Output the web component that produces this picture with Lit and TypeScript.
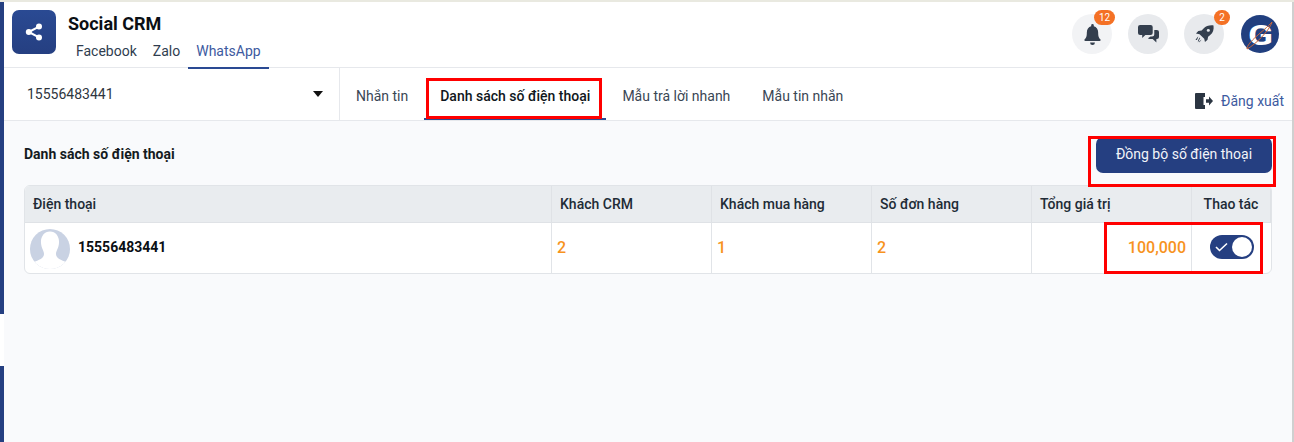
import { LitElement, css, html } from 'lit';
import { customElement } from 'lit/decorators.js';

@customElement('app-root')
export class AppRoot extends LitElement {
  static styles = css`
    :host {
      display: block;
      width: 1294px;
      height: 442px;
      position: relative;
      overflow: hidden;
      background: #fff;
      font-family: Roboto, 'Liberation Sans', sans-serif;
      color: #212b36;
    }

    .strip {
      height: 2px;
      background: #e9e9e0;
    }

    .shell {
      display: flex;
      height: 440px;
    }

    .rail {
      width: 4px;
      display: flex;
      flex-direction: column;
      flex-shrink: 0;
    }

    .rail .top {
      height: 312px;
      background: #253f81;
    }

    .rail .gap {
      height: 52px;
      background: #fff;
    }

    .rail .bottom {
      flex: 1;
      background: #253f81;
    }

    .main {
      flex: 1;
      min-width: 0;
      display: flex;
      flex-direction: column;
      border-right: 2px solid #cfd0d0;
    }

    .header {
      height: 66px;
      flex-shrink: 0;
      box-sizing: border-box;
      border-bottom: 1px solid #e6e8ec;
      display: flex;
      justify-content: space-between;
      padding: 8px 13px 0 8px;
    }

    .brand {
      display: flex;
      gap: 12px;
    }

    .logo {
      width: 44px;
      height: 44px;
      border-radius: 7px;
      background: linear-gradient(180deg, #2a4a93, #253f81);
      display: flex;
      align-items: center;
      justify-content: center;
    }

    .title {
      font-size: 18px;
      font-weight: 700;
      line-height: 24px;
      margin-top: 2px;
      color: #0b0f14;
    }

    .apps {
      display: flex;
      margin-top: 5px;
    }

    .apps a {
      font-size: 14px;
      line-height: 18px;
      padding: 1px 8px 7px;
      color: #2f3d4f;
      border-bottom: 2px solid transparent;
    }

    .apps a.active {
      color: #3d5aa0;
      border-bottom-color: #2a4a93;
    }

    .actions {
      display: flex;
      gap: 16px;
      align-items: flex-start;
      padding-top: 4px;
    }

    .round {
      width: 40px;
      height: 40px;
      border-radius: 50%;
      background: #e8eaed;
      display: flex;
      align-items: center;
      justify-content: center;
      position: relative;
    }

    .round.light {
      background: #f2f3f5;
    }

    .badge {
      position: absolute;
      top: -4px;
      height: 15px;
      min-width: 16px;
      padding: 0 2px;
      box-sizing: border-box;
      border-radius: 8px;
      background: #f47125;
      color: #fff;
      font-size: 10px;
      line-height: 15px;
      text-align: center;
    }

    .badge.wide {
      right: -3px;
      width: 21px;
    }

    .badge.narrow {
      right: -6px;
    }

    .avatar {
      width: 38px;
      height: 38px;
      margin-left: 1px;
      margin-top: 1px;
    }

    .avatar text {
      font-family: Roboto, 'Liberation Sans', sans-serif;
      font-size: 27px;
      font-weight: 700;
      fill: #fff;
    }

    .subbar {
      height: 53px;
      flex-shrink: 0;
      box-sizing: border-box;
      border-bottom: 1px solid #e6e8ec;
      display: flex;
    }

    .picker {
      width: 336px;
      box-sizing: border-box;
      border-right: 1px solid #e6e8ec;
      display: flex;
      align-items: center;
      justify-content: space-between;
      padding: 0 16px 0 23px;
      font-size: 14px;
      color: #2f3640;
    }

    .caret {
      width: 0;
      height: 0;
      border-left: 5px solid transparent;
      border-right: 5px solid transparent;
      border-top: 6px solid #111;
    }

    .tabs {
      display: flex;
      flex: 1;
    }

    .tabs a {
      font-size: 14px;
      line-height: 18px;
      padding: 19px 16px 0;
      color: #3a4654;
      box-sizing: border-box;
      height: 52px;
    }

    .tabs a.active {
      font-weight: 500;
      color: #0f1720;
      border-bottom: 2px solid #2a4a93;
    }

    .logout {
      display: flex;
      align-items: center;
      gap: 8px;
      font-size: 14px;
      color: #3d5aa0;
      padding: 13px 8px 0 0;
    }

    .content {
      flex: 1;
      background: #f9fafc;
      padding: 0 20px;
    }

    .content-head {
      display: flex;
      justify-content: space-between;
      height: 64px;
    }

    .content-head h2 {
      margin: 24px 0 0;
      font-size: 14px;
      line-height: 18px;
      font-weight: 700;
      color: #141a21;
    }

    .sync {
      width: 176px;
      height: 36px;
      margin-top: 16px;
      border: none;
      border-radius: 7px;
      background: #253f81;
      color: #f2f4f9;
      font: 400 14px/20px Roboto, 'Liberation Sans', sans-serif;
      padding: 0 0 2px;
    }

    .table {
      width: 1248px;
      border: 1px solid #e1e4e8;
      border-radius: 6px;
      overflow: hidden;
      box-sizing: border-box;
      background: #fff;
      display: grid;
      grid-template-columns: 527px 160px 160px 160px 160px 1fr;
    }

    .th {
      height: 37px;
      box-sizing: border-box;
      background: #e9ecef;
      border-bottom: 1px solid #dfe2e6;
      border-right: 1px solid #dfe2e6;
      font-size: 14px;
      font-weight: 500;
      line-height: 36px;
      padding: 0 8px;
      color: #212b36;
    }

    .td {
      height: 50px;
      box-sizing: border-box;
      border-right: 1px solid #e1e4e8;
      font-size: 16px;
      font-weight: 500;
      color: #f7931e;
      padding: 0 5px 2px;
      display: flex;
      align-items: center;
    }

    .th:last-child,
    .td:last-child {
      border-right: none;
    }

    .th.center {
      text-align: center;
      padding: 0;
    }

    .td.right {
      justify-content: flex-end;
    }

    .td.center {
      justify-content: center;
      padding: 0 0 2px;
    }

    .phone {
      gap: 8px;
      font-size: 14px;
      font-weight: 700;
      color: #0b0f14;
    }

    .phone svg {
      margin-top: 3px;
    }

    .toggle {
      width: 44px;
      height: 24px;
      border-radius: 12px;
      background: #253f81;
      position: relative;
      display: flex;
      align-items: center;
      padding-left: 5px;
      box-sizing: border-box;
    }

    .toggle i {
      position: absolute;
      top: 2px;
      right: 2px;
      width: 20px;
      height: 20px;
      border-radius: 50%;
      background: #fff;
    }

    .mark {
      position: absolute;
      box-sizing: border-box;
      border: 3px solid #f00;
      pointer-events: none;
    }

    .m1 { left: 426px; top: 78px; width: 176px; height: 41px; }
    .m2 { left: 1088px; top: 136px; width: 188px; height: 51px; }
    .m3 { left: 1104px; top: 222px; width: 159px; height: 52px; }
  `;

  render() {
    return html`
      <div class="strip"></div>
      <div class="shell">
        <div class="rail">
          <div class="top"></div>
          <div class="gap"></div>
          <div class="bottom"></div>
        </div>
        <div class="main">
          <div class="header">
            <div class="brand">
              <div class="logo">
                <svg width="18" height="18" viewBox="0 0 18 18" fill="#fff">
                  <circle cx="14" cy="3.6" r="3"></circle>
                  <circle cx="14" cy="14.4" r="3"></circle>
                  <circle cx="3.8" cy="9" r="3"></circle>
                  <path d="M3.8 9 14 3.6 M3.8 9 14 14.4" stroke="#fff" stroke-width="2" fill="none"></path>
                </svg>
              </div>
              <div>
                <div class="title">Social CRM</div>
                <div class="apps">
                  <a>Facebook</a>
                  <a>Zalo</a>
                  <a class="active">WhatsApp</a>
                </div>
              </div>
            </div>
            <div class="actions">
              <div class="round light">
                <svg width="17" height="21" viewBox="0 0 18 20" preserveAspectRatio="none" fill="#343f4e">
                  <path d="M9 0a1.400 1.400 0 0 0-1.400 1.400v.8C4.700 2.800 3 5.200 3 8c0 4-.9 5.200-2.300 6.600-.7.700-.2 1.700.7 1.700h15.200c.9 0 1.400-1 .7-1.700C16 13.200 15 12 15 8c0-2.800-1.700-5.200-4.600-5.800v-.8A1.400 1.400 0 0 0 9 0z"></path>
                  <path d="M6.500 17.500h5A2.500 2.300 0 0 1 9 20a2.500 2.300 0 0 1-2.500-2.500z"></path>
                </svg>
                <span class="badge wide">12</span>
              </div>
              <div class="round">
                <svg width="21" height="18" viewBox="0 0 20 18" preserveAspectRatio="none" fill="#343f4e">
                  <path d="M2 0h10a2 2 0 0 1 2 2v6a2 2 0 0 1-2 2H7l-3 3v-3H2a2 2 0 0 1-2-2V2a2 2 0 0 1 2-2z"></path>
                  <path d="M15.500 5H18a2 2 0 0 1 2 2v5a2 2 0 0 1-2 2h-.5v3.500L14 14h-3a2 2 0 0 1-1.500-.7L12 11.500h1.500a2 2 0 0 0 2-2z"></path>
                </svg>
              </div>
              <div class="round">
                <svg width="19" height="18" viewBox="0 0 20 20" preserveAspectRatio="none" fill="#343f4e">
                  <path d="M19.500.5c-4.500-.5-8 .8-10.500 3.500L7 6.200 3.500 6.800 1 9.500l3.800.8 4.900 4.900.8 3.800 2.700-2.500.6-3.500 2.200-2C19 9 20 5 19.500.5z"></path>
                  <circle cx="14" cy="6" r="1.600" fill="#e8eaed"></circle>
                  <path d="M3.500 12.500 0.500 16.500l1.500.2L3 14.500z M5.500 14.500 3 19.500l.2-2.500L5 14z M7 16l-2.500 3.500 0-1.500z"></path>
                </svg>
                <span class="badge narrow">2</span>
              </div>
              <svg class="avatar" viewBox="0 0 38 38">
                <circle cx="19" cy="19" r="19" fill="#213f7f"></circle>
                <text x="7" y="30" textLength="25" lengthAdjust="spacingAndGlyphs">G</text>
                <path d="M6 34C6 27 22 17 31 7 29 15 14 30 6 34Z" fill="none" stroke="#c8653a" stroke-width="1"></path>
              </svg>
            </div>
          </div>
          <div class="subbar">
            <div class="picker">
              <span>15556483441</span>
              <span class="caret"></span>
            </div>
            <div class="tabs">
              <a>Nhắn tin</a>
              <a class="active">Danh sách số điện thoại</a>
              <a>Mẫu trả lời nhanh</a>
              <a>Mẫu tin nhắn</a>
            </div>
            <div class="logout">
              <svg width="18" height="16" viewBox="0 0 18 16" fill="#2b3542">
                <path d="M1 0h6v16H1a1 1 0 0 1-1-1V1a1 1 0 0 1 1-1z"></path>
                <path d="M7 0h3v4H8.500v8H10v4H7z"></path>
                <path d="M11 6.200h3V3.500L18 8l-4 4.500v-2.700h-3z"></path>
              </svg>
              <span>Đăng xuất</span>
            </div>
          </div>
          <div class="content">
            <div class="content-head">
              <h2>Danh sách số điện thoại</h2>
              <button class="sync">Đồng bộ số điện thoại</button>
            </div>
            <div class="table">
              <div class="th">Điện thoại</div>
              <div class="th">Khách CRM</div>
              <div class="th">Khách mua hàng</div>
              <div class="th">Số đơn hàng</div>
              <div class="th">Tổng giá trị</div>
              <div class="th center">Thao tác</div>
              <div class="td phone">
                <svg width="40" height="40" viewBox="0 0 40 40">
                  <defs>
                    <clipPath id="av"><circle cx="20" cy="20" r="20"></circle></clipPath>
                  </defs>
                  <g clip-path="url(#av)">
                    <rect width="40" height="40" fill="#c9d2e3"></rect>
                    <path d="M20 2.500C26 2.500 29.500 8 29 14 28.700 19 26 22 26 25 26 29 31 31.500 37 33L40 40H0L3 33C9 31.500 14 29 14 25 14 22 11.300 19 11 14 10.500 8 14 2.500 20 2.500Z" fill="#fff"></path>
                  </g>
                </svg>
                <span>15556483441</span>
              </div>
              <div class="td">2</div>
              <div class="td">1</div>
              <div class="td">2</div>
              <div class="td right">100,000</div>
              <div class="td center">
                <div class="toggle">
                  <svg width="14" height="10" viewBox="0 0 14 10" fill="none" stroke="#fff" stroke-width="1.600">
                    <path d="M1 5l3.500 3.500L12 1.500"></path>
                  </svg>
                  <i></i>
                </div>
              </div>
            </div>
          </div>
        </div>
      </div>
      <div class="mark m1"></div>
      <div class="mark m2"></div>
      <div class="mark m3"></div>
    `;
  }
}

declare global {
  interface HTMLElementTagNameMap {
    'app-root': AppRoot;
  }
}
